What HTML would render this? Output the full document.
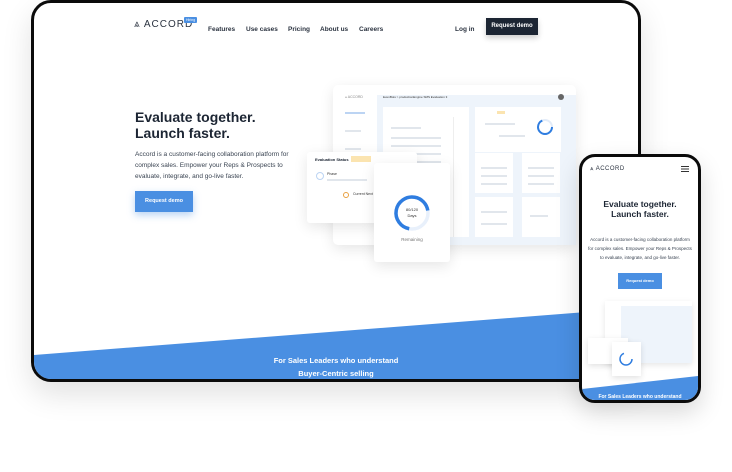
<!DOCTYPE html>
<html><head><meta charset="utf-8"><style>
*{margin:0;padding:0;box-sizing:border-box}
body{width:732px;height:472px;background:#fff;position:relative;overflow:hidden;font-family:"Liberation Sans",sans-serif;color:#1c2533}
.abs{position:absolute}
.tab{left:31px;top:0;width:610px;height:382px;border:3px solid #0b0b0b;border-radius:20px;overflow:hidden;background:#fff;box-shadow:0 12px 30px rgba(0,0,0,.12)}
.nav a{position:absolute;font-size:6.5px;font-weight:bold;color:#2b3340;top:23px}
.card{position:absolute;background:#fff;border-radius:3px;box-shadow:0 4px 14px rgba(0,0,0,.1)}
.ln{position:absolute;height:1.5px;background:#e1e6ec}
.ph{left:579px;top:154px;width:122px;height:249px;border:3px solid #0b0b0b;border-radius:16px;overflow:hidden;background:#fff;box-shadow:0 10px 24px rgba(0,0,0,.15)}
</style></head><body>
<div class="abs tab">
  <svg class="abs" style="left:0;top:0" width="604" height="376"><polygon points="0,352 604,305 604,376 0,376" fill="#4a8fe2"/></svg>
  <div class="abs" style="left:100px;top:16px;font-size:10px;letter-spacing:1px;color:#2b3340">⩓ ACCORD</div>
  <div class="abs" style="left:150px;top:14px;background:#4a8fe2;color:#fff;font-size:3.5px;padding:1px 2px;border-radius:1px">Hiring</div>
  <div class="nav"><a style="left:174px">Features</a><a style="left:212px">Use cases</a><a style="left:254px">Pricing</a><a style="left:286px">About us</a><a style="left:325px">Careers</a><a style="left:421px">Log in</a></div>
  <div class="abs" style="left:452px;top:15px;width:52px;height:17px;background:#1c2533;color:#fff;font-size:6px;font-weight:bold;text-align:center;line-height:17px;box-shadow:0 3px 6px rgba(0,0,0,.2)">Request demo</div>
  <div class="abs" style="left:101px;top:106px;font-size:14px;font-weight:bold;line-height:16px">Evaluate together.<br>Launch faster.</div>
  <div class="abs" style="left:101px;top:146px;font-size:6.5px;line-height:11px;color:#3a4452;width:175px">Accord is a customer-facing collaboration platform for complex sales. Empower your Reps &amp; Prospects to evaluate, integrate, and go-live faster.</div>
  <div class="abs" style="left:101px;top:188px;width:58px;height:21px;background:#4a8fe2;color:#fff;font-size:5.5px;font-weight:bold;text-align:center;line-height:21px;box-shadow:0 3px 8px rgba(74,143,226,.4)">Request demo</div>
  <div class="abs" style="left:0;top:351px;width:604px;text-align:center;color:#fff;font-size:7.5px;font-weight:bold;line-height:13px">For Sales Leaders who understand<br>Buyer-Centric selling</div>
</div>
<div class="card" style="left:333px;top:85px;width:243px;height:160px;border-radius:5px">
  <div class="abs" style="left:44px;top:10px;width:199px;height:150px;background:#eef4fb"></div>
  <div class="abs" style="left:12px;top:10px;font-size:3.5px;color:#888">⩓ ACCORD</div>
  <div class="ln" style="left:12px;top:27px;width:20px;background:#bcd4f3"></div>
  <div class="ln" style="left:12px;top:45px;width:16px"></div>
  <div class="ln" style="left:12px;top:63px;width:16px"></div>
  <div class="ln" style="left:12px;top:81px;width:16px"></div>
  <div class="ln" style="left:12px;top:99px;width:16px"></div>
  <div class="abs" style="left:50px;top:10px;font-size:3px;color:#333">EvenBots &gt; productionEngine SMS Evaluation 3</div>
  <div class="abs" style="left:225px;top:9px;width:6px;height:6px;border-radius:50%;background:#666"></div>
  <div class="abs" style="left:50px;top:22px;width:86px;height:130px;background:#fff">
    <div class="ln" style="left:8px;top:20px;width:30px"></div>
    <div class="ln" style="left:8px;top:30px;width:50px"></div><div class="ln" style="left:8px;top:38px;width:50px"></div>
    <div class="ln" style="left:8px;top:46px;width:50px"></div><div class="ln" style="left:8px;top:54px;width:50px"></div>
    <div class="ln" style="left:8px;top:62px;width:50px"></div><div class="ln" style="left:8px;top:70px;width:50px"></div>
    <div class="abs" style="left:70px;top:10px;width:14px;height:120px;border-left:1px solid #eee"></div>
  </div>
  <div class="abs" style="left:142px;top:22px;width:86px;height:45px;background:#fff">
    <div class="abs" style="left:22px;top:4px;width:8px;height:3px;background:#fbe4b0"></div>
    <div class="ln" style="left:10px;top:16px;width:30px"></div><div class="ln" style="left:24px;top:28px;width:26px"></div>
  </div>
  <div class="abs" style="left:142px;top:68px;width:38px;height:40px;background:#fff"><div class="ln" style="left:6px;top:14px;width:26px"></div><div class="ln" style="left:6px;top:22px;width:26px"></div><div class="ln" style="left:6px;top:30px;width:26px"></div></div>
  <div class="abs" style="left:189px;top:68px;width:38px;height:40px;background:#fff"><div class="ln" style="left:6px;top:14px;width:26px"></div><div class="ln" style="left:6px;top:22px;width:26px"></div><div class="ln" style="left:6px;top:30px;width:26px"></div></div>
  <div class="abs" style="left:142px;top:112px;width:38px;height:40px;background:#fff"><div class="ln" style="left:6px;top:14px;width:26px"></div><div class="ln" style="left:6px;top:26px;width:26px"></div></div>
  <div class="abs" style="left:189px;top:112px;width:38px;height:40px;background:#fff"><div class="ln" style="left:8px;top:18px;width:18px"></div></div>
  <svg class="abs" style="left:203px;top:33px" width="18" height="18"><circle cx="9" cy="9" r="7" fill="none" stroke="#e3ecf8" stroke-width="2"/><circle cx="9" cy="9" r="7" fill="none" stroke="#2f7de0" stroke-width="2" stroke-dasharray="30 44"/></svg>
</div>
<div class="card" style="left:307px;top:152px;width:110px;height:71px">
  <div class="abs" style="left:8px;top:5px;font-size:4px;font-weight:bold">Evaluation Status</div>
  <div class="abs" style="left:44px;top:4px;width:20px;height:6px;background:#fbe4b0"></div>
  <div class="abs" style="left:9px;top:20px;width:8px;height:8px;border-radius:50%;border:1px solid #bcd4f3"></div>
  <div class="abs" style="left:20px;top:20px;font-size:3.5px;color:#333">Phase</div>
  <div class="ln" style="left:20px;top:27px;width:40px"></div>
  <div class="abs" style="left:36px;top:40px;width:6px;height:6px;border-radius:50%;border:1px solid #e8a040"></div>
  <div class="abs" style="left:46px;top:40px;font-size:3.5px;color:#333">Current Next</div>
</div>
<div class="card" style="left:374px;top:163px;width:76px;height:99px">
  <svg class="abs" style="left:18px;top:30px" width="40" height="40"><circle cx="20" cy="20" r="16" fill="none" stroke="#e8f0fb" stroke-width="3.5"/><circle cx="20" cy="20" r="16" fill="none" stroke="#2f7de0" stroke-width="3.5" stroke-dasharray="70 101" transform="rotate(100 20 20)"/></svg>
  <div class="abs" style="left:0;top:44px;width:76px;text-align:center;font-size:4px;line-height:6px;color:#333">80/120<br>Days</div>
  <div class="abs" style="left:0;top:74px;width:76px;text-align:center;font-size:4.5px;color:#777">Remaining</div>
</div>
<div class="abs ph">
  <svg class="abs" style="left:0;top:0" width="116" height="243"><polygon points="0,232 116,219 116,243 0,243" fill="#4a8fe2"/></svg>
  <div class="abs" style="left:8px;top:9px;font-size:6px;letter-spacing:.5px;color:#2b3340">⩓ ACCORD</div>
  <div class="abs" style="left:99px;top:9px;width:8px;height:1px;background:#333;box-shadow:0 2.5px 0 #333,0 5px 0 #333"></div>
  <div class="abs" style="left:0;top:42px;width:116px;text-align:center;font-size:8.5px;font-weight:bold;line-height:10px">Evaluate together.<br>Launch faster.</div>
  <div class="abs" style="left:6px;top:78px;width:104px;text-align:center;font-size:4.5px;line-height:9px;color:#3a4452">Accord is a customer-facing collaboration platform for complex sales. Empower your Reps &amp; Prospects to evaluate, integrate, and go-live faster.</div>
  <div class="abs" style="left:36px;top:116px;width:44px;height:16px;background:#4a8fe2;color:#fff;font-size:4px;font-weight:bold;text-align:center;line-height:16px">Request demo</div>
  <div class="abs" style="left:23px;top:144px;width:87px;height:62px;background:#fff;box-shadow:0 2px 6px rgba(0,0,0,.1)"><div class="abs" style="left:16px;top:5px;width:71px;height:57px;background:#eef4fb"></div></div>
  <div class="abs" style="left:6px;top:181px;width:40px;height:26px;background:#fff;box-shadow:0 2px 6px rgba(0,0,0,.12)"></div>
  <div class="abs" style="left:30px;top:185px;width:29px;height:34px;background:#fff;box-shadow:0 2px 6px rgba(0,0,0,.12)"><svg class="abs" style="left:6px;top:9px" width="16" height="16"><circle cx="8" cy="8" r="6" fill="none" stroke="#2f7de0" stroke-width="1.5" stroke-dasharray="26 38"/></svg></div>
  <div class="abs" style="left:0;top:237px;width:116px;text-align:center;color:#fff;font-size:5px;font-weight:bold">For Sales Leaders who understand</div>
</div>
</body></html>
